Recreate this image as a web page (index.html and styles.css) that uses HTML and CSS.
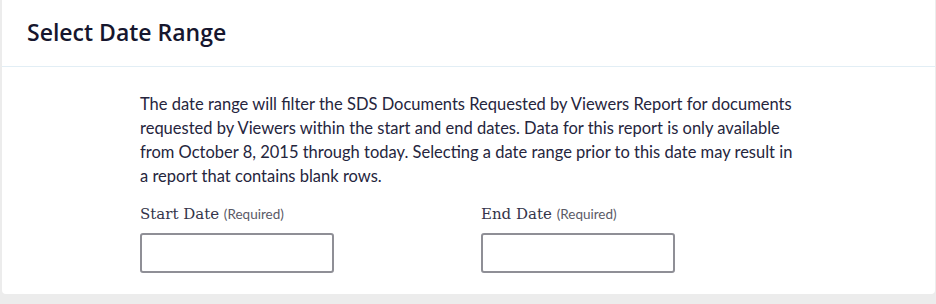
FILE: index.html
```html
<!DOCTYPE html>
<html lang="en">
<head>
<meta charset="utf-8">
<title>Select Date Range</title>
<link rel="stylesheet" href="styles.css">
</head>
<body>
<div class="card">
  <div class="card-header">
    <h2 class="card-title">Select Date Range</h2>
  </div>
  <div class="card-body">
    <p class="intro">The date range will filter the SDS Documents Requested by Viewers Report for documents requested by Viewers within the start and end dates. Data for this report is only available from October 8, 2015 through today. Selecting a date range prior to this date may result in a report that contains blank rows.</p>
    <div class="fields">
      <div class="field">
        <label class="field-label" for="start">Start Date <span class="req">(Required)</span></label>
        <input class="field-input" id="start" type="text">
      </div>
      <div class="field">
        <label class="field-label" for="end">End Date <span class="req">(Required)</span></label>
        <input class="field-input" id="end" type="text">
      </div>
    </div>
  </div>
</div>
</body>
</html>
```
FILE: styles.css
```css
html, body {
  margin: 0;
  padding: 0;
  background: #ececec;
}
body {
  padding: 0 1px 0 2px;
  height: 304px;
  box-sizing: border-box;
  font-family: Lato, "Open Sans", sans-serif;
  color: #22223a;
}
.card {
  background: #fff;
  border-radius: 0 0 4px 4px;
  height: 294px;
  box-sizing: border-box;
}
.card-header {
  height: 67px;
  box-sizing: border-box;
  border-bottom: 1px solid #e2eef5;
  padding: 17px 0 0 25px;
}
.card-title {
  margin: 0;
  font-family: "Open Sans", sans-serif;
  font-weight: 600;
  font-size: 23px;
  line-height: 30px;
  color: #16162e;
}
.card-body {
  padding: 25px 0 0 138px;
}
.intro {
  margin: 0;
  max-width: 660px;
  font-size: 16.5px;
  line-height: 24px;
  color: #25253d;
}
.fields {
  display: flex;
  gap: 147px;
  margin-top: 16px;
}
.field {
  display: flex;
  flex-direction: column;
  width: 194px;
}
.field-label {
  font-family: "DejaVu Serif", serif;
  font-size: 15px;
  line-height: 20px;
  color: #34344a;
  margin-bottom: 9px;
}
.req {
  font-family: Lato, sans-serif;
  font-size: 13.5px;
  color: #5a5a66;
}
.field-input {
  width: 194px;
  height: 40px;
  box-sizing: border-box;
  border: 2px solid #8f8f96;
  border-radius: 3px;
  background: #fff;
  margin: 0;
}
```
